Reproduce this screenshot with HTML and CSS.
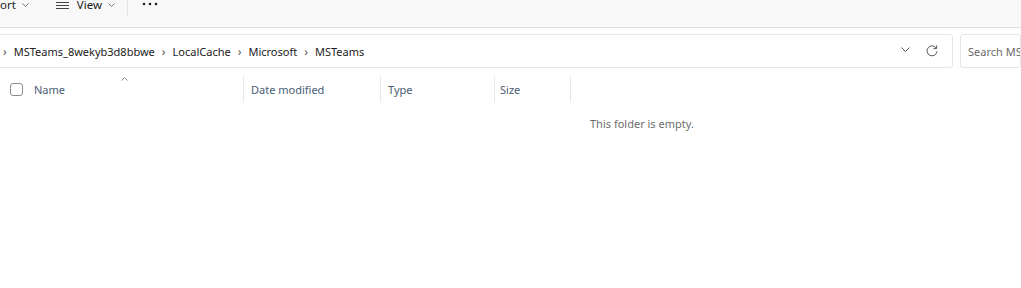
FILE: index.html
```html
<!DOCTYPE html>
<html lang="en">
<head>
    <meta charset="UTF-8">
    <title>MSTeams - File Explorer</title>
    <link rel="stylesheet" href="styles.css">
</head>
<body>
    <div class="toolbar">
        <div class="tool">
            <span>ort</span>
            <svg class="chev" width="7" height="4" viewBox="0 0 7 4"><path d="M0.5 0.5 L3.5 3.5 L6.5 0.5" fill="none" stroke="#777" stroke-width="1"/></svg>
        </div>
        <div class="tool view">
            <svg class="lines" width="13" height="8" viewBox="0 0 13 8"><path d="M0 1.5 H13 M0 4.5 H13 M0 7.5 H13" stroke="#444" stroke-width="1"/></svg>
            <span>View</span>
            <svg class="chev" width="7" height="4" viewBox="0 0 7 4"><path d="M0.5 0.5 L3.5 3.5 L6.5 0.5" fill="none" stroke="#777" stroke-width="1"/></svg>
        </div>
        <div class="sep"></div>
        <div class="tool more">
            <svg width="16" height="4" viewBox="0 0 16 4"><circle cx="2" cy="2" r="1.3" fill="#222"/><circle cx="8" cy="2" r="1.3" fill="#222"/><circle cx="14" cy="2" r="1.3" fill="#222"/></svg>
        </div>
    </div>

    <div class="addressbar">
        <div class="crumbs">
            <div class="path">
                <span class="arrow">›</span>
                <span>MSTeams_8wekyb3d8bbwe</span>
                <span class="arrow">›</span>
                <span>LocalCache</span>
                <span class="arrow">›</span>
                <span>Microsoft</span>
                <span class="arrow">›</span>
                <span>MSTeams</span>
            </div>
            <div class="crumb-actions">
                <svg class="drop" width="9" height="5" viewBox="0 0 9 5"><path d="M0.5 0.5 L4.5 4.5 L8.5 0.5" fill="none" stroke="#555" stroke-width="1"/></svg>
                <svg width="12" height="12" viewBox="0 0 12 12"><path d="M10.3 3.2 A5 5 0 1 0 11 6.5" fill="none" stroke="#555" stroke-width="1"/><path d="M10.6 0.5 V3.6 H7.5" fill="none" stroke="#555" stroke-width="1"/></svg>
            </div>
        </div>
        <div class="search">Search MST</div>
    </div>

    <div class="header">
        <div class="col col-name">
            <span class="check"></span>
            <span>Name</span>
            <svg class="sort" width="7" height="4" viewBox="0 0 7 4"><path d="M0.5 3.5 L3.5 0.5 L6.5 3.5" fill="none" stroke="#888" stroke-width="1"/></svg>
        </div>
        <div class="col col-date">Date modified</div>
        <div class="col col-type">Type</div>
        <div class="col col-size">Size</div>
    </div>

    <div class="empty">This folder is empty.</div>
</body>
</html>
```

FILE: styles.css
```css
body {
    margin: 0;
    background: #fff;
    font-family: "Noto Sans", "Open Sans", sans-serif;
    font-size: 11px;
    color: #1b1b1b;
    overflow: hidden;
}
.toolbar {
    height: 27px;
    background: #f8f8f8;
    border-bottom: 1px solid #e0e0e0;
    display: flex;
    align-items: flex-start;
}
.tool {
    display: flex;
    align-items: center;
    height: 8px;
    line-height: 8px;
    font-size: 11.5px;
    color: #1b1b1b;
    padding-top: 1px;
}
.tool .chev {
    margin-left: 6px;
}
.view {
    margin-left: 27px;
}
.view .lines {
    margin-right: 8px;
    margin-top: -1px;
}
.sep {
    width: 1px;
    height: 16px;
    background: #e6e6e6;
    margin-left: 12px;
}
.more {
    margin-left: 14px;
    height: 6px;
}
.addressbar {
    display: flex;
    margin-top: 6px;
    height: 34px;
}
.crumbs {
    width: 960px;
    margin-left: -9px;
    border: 1px solid #e5e5e5;
    border-radius: 3px;
    display: flex;
    align-items: center;
    justify-content: space-between;
}
.path {
    display: flex;
    align-items: center;
    gap: 7px;
    padding-left: 11px;
    color: #1b1b1b;
}
.arrow {
    color: #555;
    font-size: 12px;
}
.crumb-actions {
    display: flex;
    align-items: center;
    gap: 16px;
    padding-right: 14px;
}
.drop {
    margin-top: -4px;
}
.search {
    margin-left: 7px;
    flex: 1;
    border: 1px solid #e5e5e5;
    border-radius: 3px;
    display: flex;
    align-items: center;
    padding-left: 7px;
    color: #6a6a6a;
    white-space: nowrap;
    overflow: hidden;
}
.header {
    display: flex;
    margin-top: 8px;
    height: 26px;
}
.col {
    display: flex;
    align-items: center;
    color: #4a5d75;
    border-right: 1px solid #e8e8e8;
    box-sizing: border-box;
}
.col-name {
    width: 244px;
    padding-left: 10px;
    position: relative;
}
.check {
    width: 11px;
    height: 11px;
    border: 1px solid #8a8a8a;
    border-radius: 3px;
    margin-right: 11px;
}
.sort {
    position: absolute;
    left: 121px;
    top: 1px;
}
.col-date {
    width: 137px;
    padding-left: 7px;
}
.col-type {
    width: 114px;
    padding-left: 7px;
}
.col-size {
    width: 76px;
    padding-left: 5px;
}
.empty {
    margin-top: 14px;
    margin-left: 590px;
    color: #6e6e6e;
}
```
